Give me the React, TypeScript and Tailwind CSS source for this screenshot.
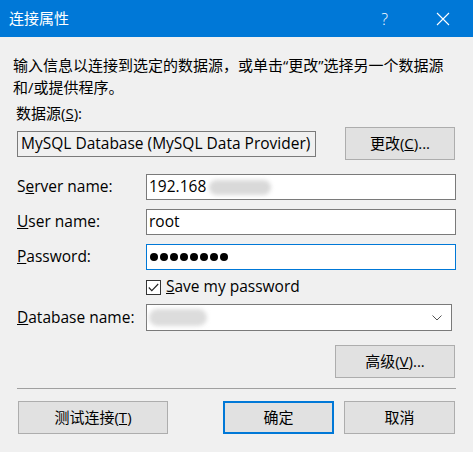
import React from 'react';

const font = "font-['Open_Sans','Noto_Sans_CJK_SC',sans-serif]";

const Btn: React.FC<{ w: string; primary?: boolean; children: React.ReactNode }> = ({ w, primary, children }) => (
  <button
    className={`${w} h-[33px] bg-[#e1e1e1] text-[15px] text-black flex items-center justify-center leading-none ${
      primary ? 'border-2 border-[#0078d7]' : 'border border-[#adadad]'
    }`}
  >
    {children}
  </button>
);

const Field: React.FC<{ label: React.ReactNode; children: React.ReactNode }> = ({ label, children }) => (
  <div className="flex items-center h-[26px]">
    <div className="w-[129px] text-[15.5px] leading-none">{label}</div>
    {children}
  </div>
);

export default function App() {
  return (
    <div className={`w-[473px] h-[452px] bg-[#f0f0f0] flex flex-col text-black ${font}`}>
      {/* title bar */}
      <div className="h-[37px] bg-[#0078d7] flex items-center pl-[9px] text-white text-[15px] shrink-0">
        <span className="leading-none">连接属性</span>
        <span className="ml-auto mr-[48px] text-[16px] font-light leading-none">?</span>
        <svg width="14" height="14" viewBox="0 0 14 14" className="mr-[23px]">
          <path d="M1 1 L13 13 M13 1 L1 13" stroke="white" strokeWidth="1.1" />
        </svg>
      </div>

      <p className="px-[13px] pt-[17px] text-[15px] leading-[22px] whitespace-nowrap">
        输入信息以连接到选定的数据源，或单击“更改”选择另一个数据源
        <br />
        和/或提供程序。
      </p>

      <div className="px-[16px] mt-[4px] text-[15px] leading-[22px]">
        数据源(<u>S</u>):
      </div>

      <div className="flex items-center justify-between pl-[17px] pr-[18px] mt-[3px] h-[33px]">
        <div className="w-[299px] h-[26px] border border-[#7a7a7a] pl-[3px] flex items-center text-[15.5px] whitespace-nowrap overflow-hidden">
          MySQL Database (MySQL Data Provider)
        </div>
        <Btn w="w-[110px]">
          更改(<u>C</u>)...
        </Btn>
      </div>

      <div className="flex flex-col gap-[9px] pl-[17px] mt-[14px]">
        <Field label={<>S<u>e</u>rver name:</>}>
          <div className="relative w-[310px] h-[26px] bg-white border border-[#7a7a7a] pl-[2px] flex items-center text-[15.5px]">
            192.168
            <div className="absolute left-[62px] top-[5px] w-[62px] h-[15px] rounded-full bg-[#d9d9d9] blur-[2px]" />
          </div>
        </Field>
        <Field label={<><u>U</u>ser name:</>}>
          <div className="w-[310px] h-[26px] bg-white border border-[#7a7a7a] pl-[2px] flex items-center text-[15.5px]">
            root
          </div>
        </Field>
        <Field label={<><u>P</u>assword:</>}>
          <div className="w-[310px] h-[26px] bg-white border border-[#0078d7] pl-[3px] flex items-center gap-[2px]">
            {Array.from({ length: 8 }).map((_, i) => (
              <span key={i} className="w-[8px] h-[8px] rounded-full bg-black" />
            ))}
          </div>
        </Field>
        <div className="flex items-center h-[16px] pl-[129px]">
          <div className="w-[15px] h-[15px] border border-[#333] bg-white flex items-center justify-center">
            <svg width="11" height="9" viewBox="0 0 11 9">
              <path d="M0.8 4.5 L3.8 7.6 L10.2 1" stroke="#222" strokeWidth="1.1" fill="none" />
            </svg>
          </div>
          <span className="ml-[5px] text-[15.5px] leading-none">
            <u>S</u>ave my password
          </span>
        </div>
        <div className="flex items-center h-[27px]">
          <div className="w-[129px] text-[15.5px] leading-none">
            <u>D</u>atabase name:
          </div>
          <div className="relative w-[306px] h-[27px] bg-white border border-[#7a7a7a] flex items-center">
            <div className="absolute left-[2px] top-[4px] w-[58px] h-[17px] rounded-full bg-[#dcdcdc] blur-[2px]" />
            <svg width="10" height="6" viewBox="0 0 10 6" className="ml-auto mr-[9px]">
              <path d="M0.5 0.5 L5 5 L9.5 0.5" stroke="#555" strokeWidth="1" fill="none" />
            </svg>
          </div>
        </div>
      </div>

      <div className="flex justify-end pr-[18px] mt-[14px]">
        <Btn w="w-[120px]">
          高级(<u>V</u>)...
        </Btn>
      </div>

      <div className="mx-[17px] mt-[10px] h-px bg-[#a0a0a0]" />

      <div className="flex items-center pl-[18px] pr-[18px] mt-[12px]">
        <Btn w="w-[150px]">
          测试连接(<u>T</u>)
        </Btn>
        <div className="ml-auto flex gap-[10px]">
          <Btn w="w-[111px]" primary>
            确定
          </Btn>
          <Btn w="w-[111px]">取消</Btn>
        </div>
      </div>
    </div>
  );
}
